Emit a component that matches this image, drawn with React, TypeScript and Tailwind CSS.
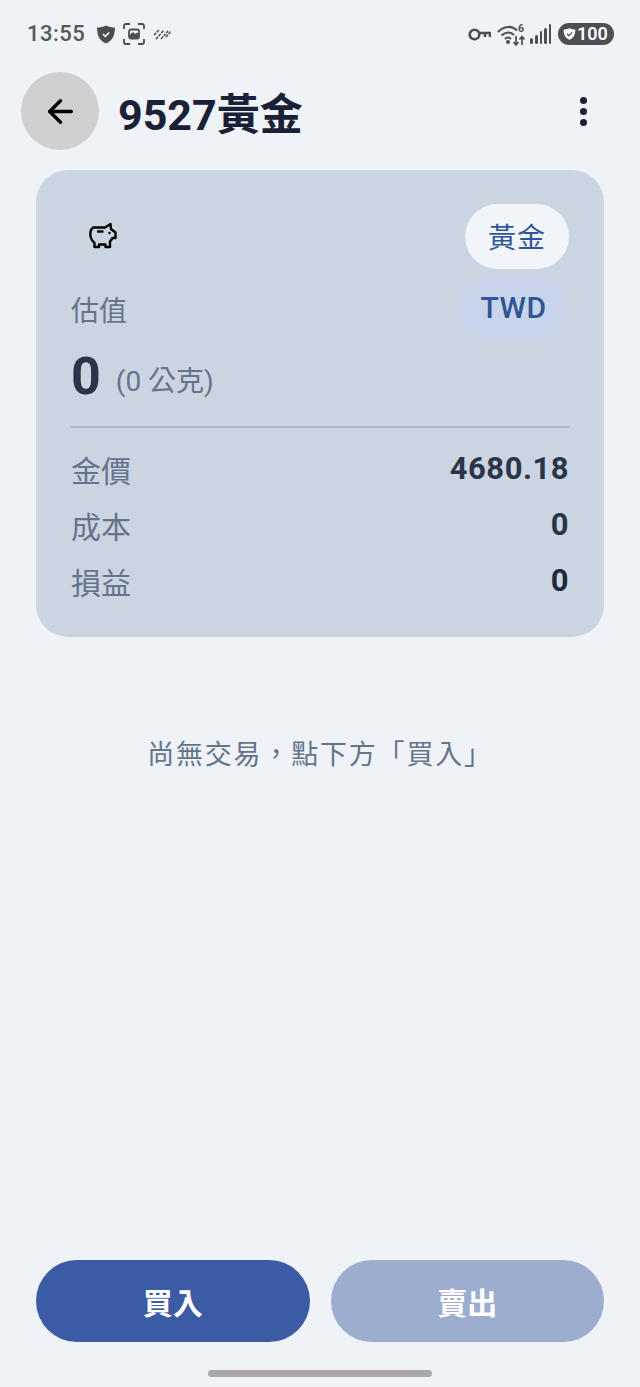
import { ArrowLeft } from "lucide-react";

const CJK = "font-['Roboto','Noto_Sans_CJK_TC',sans-serif]";

const StatusLeft = () => (
  <div className="flex items-center">
    <span className="text-[22px] leading-none font-medium text-[#55575a] tracking-[0.5px]">13:55</span>
    <svg className="ml-[11px]" width="20" height="21" viewBox="0 0 20 20">
      <path d="M10 1 C7 2.5 4 3 1 3 C1 10 3 16 10 19 C17 16 19 10 19 3 C16 3 13 2.5 10 1Z" fill="#4c4e52" />
      <path d="M7 9.5 L9.3 11.8 L13.2 8" fill="none" stroke="#fff" strokeWidth="1.6" />
    </svg>
    <svg className="ml-[7px]" width="22" height="22" viewBox="0 0 22 22" fill="none" stroke="#4c4e52" strokeWidth="1.8">
      <path d="M1 6 V3 Q1 1 3 1 H7 M15 1 H19 Q21 1 21 3 V6 M21 16 V19 Q21 21 19 21 H15 M7 21 H3 Q1 21 1 19 V16" />
      <rect x="6" y="6.5" width="10" height="9" rx="2" />
      <path d="M6.5 12 L10 9 L12 11 L14 9.5 L15.5 11 V15 H6.5Z" fill="#4c4e52" stroke="none" />
    </svg>
    <svg className="ml-[8px]" width="19" height="12" viewBox="0 0 19 12" fill="none" stroke="#4c4e52" strokeWidth="1.5" strokeDasharray="3 1">
      <path d="M1 7 L6 2 M3 11 L11 2 M8 11 L15 3 M13 9 L18 3" />
    </svg>
  </div>
);

const StatusRight = () => (
  <div className="flex items-center">
    <svg width="23" height="13" viewBox="0 0 23 13" fill="none" stroke="#4c4e52" strokeWidth="2.6">
      <circle cx="6.5" cy="6.5" r="4.8" />
      <path d="M11 5 H22 V9 M17 5 V9" />
    </svg>
    <svg className="ml-[6px]" width="29" height="26" viewBox="0 -3 29 26" fill="none" stroke="#4c4e52" strokeWidth="2.1">
      <path d="M1 8 C7 1.500 15 1.500 20 6.500 M4.500 11.500 C8.500 7.500 13.500 7.500 17 11 M8 15 C10 13 12 13 14 15" />
      <circle cx="11" cy="18" r="2" fill="#4c4e52" stroke="none" />
      <path d="M19 12 V21 M16.500 18 L19 21 L21.500 18" strokeWidth="1.7" />
      <path d="M25 21 V13 M22.500 15.500 L25 12.500 L27.500 15.500" strokeWidth="1.7" />
      <text x="21" y="8" fontSize="10.500" fontWeight="700" fill="#4c4e52" stroke="none" fontFamily="Roboto">6</text>
    </svg>
    <div className="ml-[4px] flex items-end gap-[2px] h-[20px]">
      <span className="w-[3px] h-[6px] bg-[#4c4e52] rounded-sm" />
      <span className="w-[3px] h-[9px] bg-[#4c4e52] rounded-sm" />
      <span className="w-[2.5px] h-[13px] bg-[#4c4e52] rounded-sm" />
      <span className="w-[2.5px] h-[16px] bg-[#4c4e52] rounded-sm" />
      <span className="w-[2.5px] h-[20px] bg-[#4c4e52] rounded-sm" />
    </div>
    <div className="ml-[7px] flex items-center h-[22px] w-[56px] rounded-full bg-[#4c4e52] pl-[5px]">
      <svg width="13" height="14" viewBox="0 0 20 20">
        <path d="M10 1 C7 2.5 4 3 1 3 C1 10 3 16 10 19 C17 16 19 10 19 3 C16 3 13 2.5 10 1Z" fill="#fff" />
        <path d="M6 9.5 L9 12.5 L14 7.5" fill="none" stroke="#4c4e52" strokeWidth="2" />
      </svg>
      <span className="ml-[1px] text-[18px] leading-none font-semibold text-white">100</span>
    </div>
  </div>
);

const PiggyIcon = () => (
  <svg width="30" height="28" viewBox="0 0 30 28" fill="none" stroke="#000" strokeWidth="2.4" strokeLinejoin="round">
    <path d="M5 5.500 H17 L22.500 2 L23 7 L27.500 10.500 V16 H24.500 L22 19.500 V25 H17.500 V22.500 H11 V25 H6.500 V21 C3 18 1.800 14 2.500 10 C3 7.500 3.500 6.500 5 5.500Z" />
    <path d="M9 9.500 H15.500" />
    <circle cx="21.500" cy="11" r="1.200" fill="#000" stroke="none" />
  </svg>
);

const Row = ({ label, value, color }: { label: string; value: string; color: string }) => (
  <div className="flex items-center justify-between h-[56px]">
    <span className="pt-[8px] text-[30px] leading-none text-[#64748b]">{label}</span>
    <span className={`text-[31px] leading-none font-bold tracking-[0.5px] ${color}`}>{value}</span>
  </div>
);

export default function App() {
  return (
    <div className={`${CJK} w-[640px] h-[1387px] bg-[#eff2f7] flex flex-col overflow-hidden`}>
      <div className="flex items-center justify-between pl-[27px] pr-[26px] h-[68px] shrink-0">
        <StatusLeft />
        <StatusRight />
      </div>

      <div className="flex items-center pl-[21px] pr-[53px] h-[94px] shrink-0 mt-[-4px]">
        <button className="w-[78px] h-[78px] rounded-full bg-[#cfcfd1] flex items-center justify-center">
          <ArrowLeft size={37} strokeWidth={2.2} color="#000" />
        </button>
        <h1 className="ml-[19px] pt-[8px] text-[43px] leading-none font-bold text-[#1a2035]">9527黃金</h1>
        <div className="ml-auto flex flex-col gap-[4px]">
          <span className="w-[7px] h-[7px] rounded-full bg-[#1a2035]" />
          <span className="w-[7px] h-[7px] rounded-full bg-[#1a2035]" />
          <span className="w-[7px] h-[7px] rounded-full bg-[#1a2035]" />
        </div>
      </div>

      <section className="mx-[36px] mt-[12px] h-[467px] shrink-0 rounded-[32px] bg-[#cbd5e1] px-[35px] pt-[34px]">
        <div className="flex items-start justify-between h-[136px]">
          <div className="flex flex-col">
            <div className="ml-[17px] mt-[18px] h-[28px]">
              <PiggyIcon />
            </div>
            <span className="text-[28px] leading-none text-[#64748b] mt-[48px]">估值</span>
          </div>
          <div className="flex flex-col items-end gap-[8px]">
            <span className="w-[104px] h-[65px] pt-[5px] rounded-full bg-[#f1f5f9] flex items-center justify-center text-[28px] text-[#2f5597] tracking-[1px]">黃金</span>
            <span className="w-[111px] h-[63px] pb-[3px] rounded-full bg-[#c7d4ea] flex items-center justify-center text-[30px] font-medium text-[#2f5597] tracking-[0.5px]">TWD</span>
          </div>
        </div>
        <div className="mt-[7px] flex items-baseline">
          <span className="text-[52px] leading-[60px] font-bold text-[#293548]">0</span>
          <span className="ml-[15px] text-[28px] text-[#64748b] -translate-y-[3px]">(0 公克)</span>
        </div>
        <div className="mt-[19px] h-[2px] bg-[#abb8c9]" />
        <div className="mt-[12px]">
          <Row label="金價" value="4680.18" color="text-[#293548]" />
          <Row label="成本" value="0" color="text-[#293548]" />
          <Row label="損益" value="0" color="text-[#1e293b]" />
        </div>
      </section>

      <p className="mt-[100px] text-center text-[27px] leading-[36px] text-[#64748b] tracking-[1.8px]">尚無交易，點下方「買入」</p>

      <div className="mt-auto flex gap-[21px] px-[36px] shrink-0">
        <button className="flex-1 h-[82px] pt-[4px] rounded-full bg-[#3b5ba5] text-[30px] font-bold text-white">買入</button>
        <button className="flex-1 h-[82px] pt-[4px] rounded-full bg-[#9dadd0] text-[30px] font-bold text-white">賣出</button>
      </div>
      <div className="flex justify-center h-[45px] shrink-0 pt-[28px]">
        <span className="w-[224px] h-[7px] rounded-full bg-[#a9a9ab]" />
      </div>
    </div>
  );
}
